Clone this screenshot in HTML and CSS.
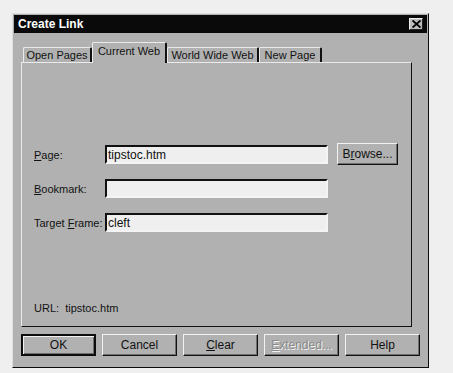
FILE: index.html
```html
<!DOCTYPE html>
<html lang="en">
<head>
    <meta charset="UTF-8">
    <title>Create Link</title>
    <link rel="stylesheet" href="styles.css">
</head>
<body>

<div class="window">
    <div class="titlebar">
        <span class="title">Create Link</span>
        <span class="close">
            <svg width="9" height="8" viewBox="0 0 9 8">
                <path d="M0.5 0.5 L8.5 7.5 M8.5 0.5 L0.5 7.5" stroke="#000" stroke-width="1.9" fill="none"/>
            </svg>
        </span>
    </div>

    <div class="content">
        <!-- tabs -->
        <div class="tabs">
            <div class="tab tab-open">Open Pages</div>
            <div class="tab tab-current active">Current Web</div>
            <div class="tab tab-www">World Wide Web</div>
            <div class="tab tab-new">New Page</div>
        </div>

        <div class="panel">
            <div class="fields">
                <div class="row">
                    <label><u>P</u>age:</label>
                    <div class="input">tipstoc.htm</div>
                    <div class="btn browse">B<u>r</u>owse...</div>
                </div>
                <div class="row">
                    <label><u>B</u>ookmark:</label>
                    <div class="input"></div>
                </div>
                <div class="row">
                    <label>Target <u>F</u>rame:</label>
                    <div class="input">cleft</div>
                </div>
            </div>
            <div class="url">URL:&nbsp; tipstoc.htm</div>
        </div>

        <div class="buttons">
            <div class="btn default">OK</div>
            <div class="btn">Cancel</div>
            <div class="btn"><u>C</u>lear</div>
            <div class="btn disabled"><u>E</u>xtended...</div>
            <div class="btn">Help</div>
        </div>
    </div>
</div>

</body>
</html>
```

FILE: styles.css
```css
body {
    margin: 0;
    background-color: #efefef;
    font-family: "Liberation Sans", Arial, sans-serif;
    font-size: 11px;
    color: #111;
}
.window {
    box-sizing: border-box;
    width: 417px;
    height: 355px;
    margin: 13px 0 0 12px;
    padding: 1px;
    background: #b1b1b1;
    border: 1px solid;
    border-color: #dedede #0c0c0c #0c0c0c #dedede;
}
.titlebar {
    height: 18px;
    background: #0a0a0a;
    display: flex;
    align-items: center;
    justify-content: space-between;
    padding: 0 4px 0 4px;
}
.title {
    color: #fff;
    font-weight: bold;
    font-size: 12px;
}
.close {
    box-sizing: border-box;
    width: 14px;
    height: 12px;
    background: #bcbcbc;
    border: 1px solid;
    border-color: #f0f0f0 #222 #222 #f0f0f0;
    display: flex;
    align-items: center;
    justify-content: center;
}
.content {
    padding: 9px 0 0 7px;
}
.tabs {
    display: flex;
    align-items: flex-end;
    height: 20px;
    padding-left: 2px;
    position: relative;
    z-index: 1;
}
.tab {
    box-sizing: border-box;
    height: 15px;
    background: #b1b1b1;
    border-top: 1px solid #eaeaea;
    border-left: 1px solid #eaeaea;
    border-right: 2px solid #111;
    border-radius: 2px 2px 0 0;
    text-align: center;
    line-height: 14px;
}
.tab-open { width: 69px; }
.tab-current { width: 75px; }
.tab-www { width: 92px; }
.tab-new { width: 63px; }
.tab.active {
    height: 21px;
    margin-bottom: -1px;
    line-height: 16px;
    padding-bottom: 3px;
}
.panel {
    box-sizing: border-box;
    width: 391px;
    height: 265px;
    border: 1px solid;
    border-color: #eaeaea #111 #111 #eaeaea;
    display: flex;
    flex-direction: column;
    padding: 82px 0 12px 12px;
}
.fields {
    display: flex;
    flex-direction: column;
    gap: 15px;
}
.row {
    display: flex;
    align-items: center;
    height: 19px;
}
.row label {
    width: 71px;
    white-space: nowrap;
}
.input {
    box-sizing: border-box;
    width: 223px;
    height: 19px;
    background: #efefef;
    border: 2px solid;
    border-color: #111 #f4f4f4 #f4f4f4 #111;
    padding: 1px 1px;
    line-height: 14px;
    font-size: 12px;
}
.btn {
    box-sizing: border-box;
    width: 75px;
    height: 22px;
    border: 1px solid;
    border-color: #f2f2f2 #111 #111 #f2f2f2;
    box-shadow: inset -1px -1px 0 #6e6e6e;
    display: flex;
    align-items: center;
    justify-content: center;
    font-size: 12px;
}
.browse {
    width: 61px;
    margin-left: 9px;
    margin-top: -1px;
}
.url {
    margin-top: auto;
}
.buttons {
    display: flex;
    gap: 6px;
    margin-top: 7px;
}
.btn.default {
    border: 2px solid #0c0c0c;
    box-shadow: inset 1px 1px 0 #f2f2f2, inset -1px -1px 0 #6e6e6e;
}
.btn.disabled {
    color: #8a8a8a;
    text-shadow: 1px 1px 0 #f2f2f2;
}
```
